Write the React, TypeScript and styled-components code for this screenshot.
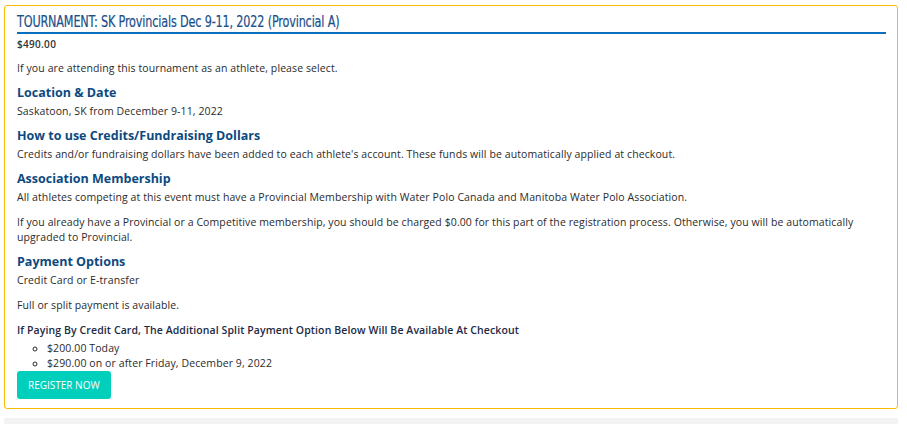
import { FC } from 'react';
import styled, { createGlobalStyle } from 'styled-components';

const GlobalStyle = createGlobalStyle`
  html, body {
    margin: 0;
    padding: 0;
    background: #fff;
  }
  body {
    font-family: 'Open Sans', 'Liberation Sans', sans-serif;
    color: #2b2b2b;
  }
`;

const Page = styled.div`
  width: 907px;
  height: 424px;
  box-sizing: border-box;
  padding: 5px 9px 0 4px;
  display: flex;
  flex-direction: column;
  overflow: hidden;
`;

const Card = styled.section`
  border: 1px solid #fbbc05;
  border-radius: 3px;
  padding: 0 11px 9px 12px;
  box-sizing: border-box;
  width: 894px;
`;

const Title = styled.h2`
  margin: 0;
  padding-top: 5px;
  font-weight: normal;
  font-size: 16px;
  line-height: 20px;
  color: #1a4f8b;
  border-bottom: 2px solid #0a6ebd;
  white-space: nowrap;
`;

// condensed display face, narrowed to the width of the original heading font
const TitleText = styled.span`
  display: inline-block;
  font-family: 'DejaVu Sans Condensed', 'DejaVu Sans', sans-serif;
  font-stretch: condensed;
  letter-spacing: -0.2px;
  transform: scaleX(0.78);
  transform-origin: left center;
  -webkit-text-stroke: 0.2px #1a4f8b;
`;

const Price = styled.p`
  margin: 3px 0 10px;
  font-size: 10px;
  line-height: 14px;
  font-weight: 600;
  letter-spacing: 0.3px;
  color: #333;
`;

const Text = styled.p<{ strong?: boolean }>`
  margin: 0 0 10px;
  font-size: 10.5px;
  line-height: 15px;
  letter-spacing: 0.1px;
  font-weight: ${({ strong }) => (strong ? 600 : 400)};
  color: ${({ strong }) => (strong ? '#1d2a44' : '#2b2b2b')};
`;

const Heading = styled.h3`
  margin: 0 0 5px;
  font-size: 12.5px;
  line-height: 13px;
  font-weight: 700;
  color: #0d4a80;
`;

const SplitList = styled.ul`
  margin: -7px 0 0;
  padding-left: 30px;
  list-style: circle;
  font-size: 10.5px;
  line-height: 15px;
  letter-spacing: 0.1px;
  color: #2b2b2b;
`;

const RegisterButton = styled.button`
  display: block;
  height: 28px;
  padding: 0 11px;
  border: none;
  border-radius: 3px;
  background: #00cfbc;
  color: #fff;
  font-family: 'Open Sans', 'Liberation Sans', sans-serif;
  font-size: 10px;
  text-transform: uppercase;
  cursor: pointer;
`;

const FooterBar = styled.div`
  margin-top: 9px;
  height: 8px;
  width: 894px;
  background: #f3f3f3;
`;

const App: FC = () => (
  <>
    <GlobalStyle />
    <Page>
      <Card>
        <Title>
          <TitleText>TOURNAMENT: SK Provincials Dec 9-11, 2022 (Provincial A)</TitleText>
        </Title>
        <Price>$490.00</Price>
        <Text>If you are attending this tournament as an athlete, please select.</Text>

        <Heading>Location &amp; Date</Heading>
        <Text>Saskatoon, SK from December 9-11, 2022</Text>

        <Heading>How to use Credits/Fundraising Dollars</Heading>
        <Text>
          Credits and/or fundraising dollars have been added to each athlete's account. These funds
          will be automatically applied at checkout.
        </Text>

        <Heading>Association Membership</Heading>
        <Text>
          All athletes competing at this event must have a Provincial Membership with Water Polo
          Canada and Manitoba Water Polo Association.
        </Text>
        <Text>
          If you already have a Provincial or a Competitive membership, you should be charged $0.00
          for this part of the registration process. Otherwise, you will be automatically upgraded
          to Provincial.
        </Text>

        <Heading>Payment Options</Heading>
        <Text>Credit Card or E-transfer</Text>
        <Text>Full or split payment is available.</Text>
        <Text strong>
          If Paying By Credit Card, The Additional Split Payment Option Below Will Be Available At
          Checkout
        </Text>
        <SplitList>
          <li>$200.00 Today</li>
          <li>$290.00 on or after Friday, December 9, 2022</li>
        </SplitList>
        <RegisterButton>Register Now</RegisterButton>
      </Card>
      <FooterBar />
    </Page>
  </>
);

export default App;
